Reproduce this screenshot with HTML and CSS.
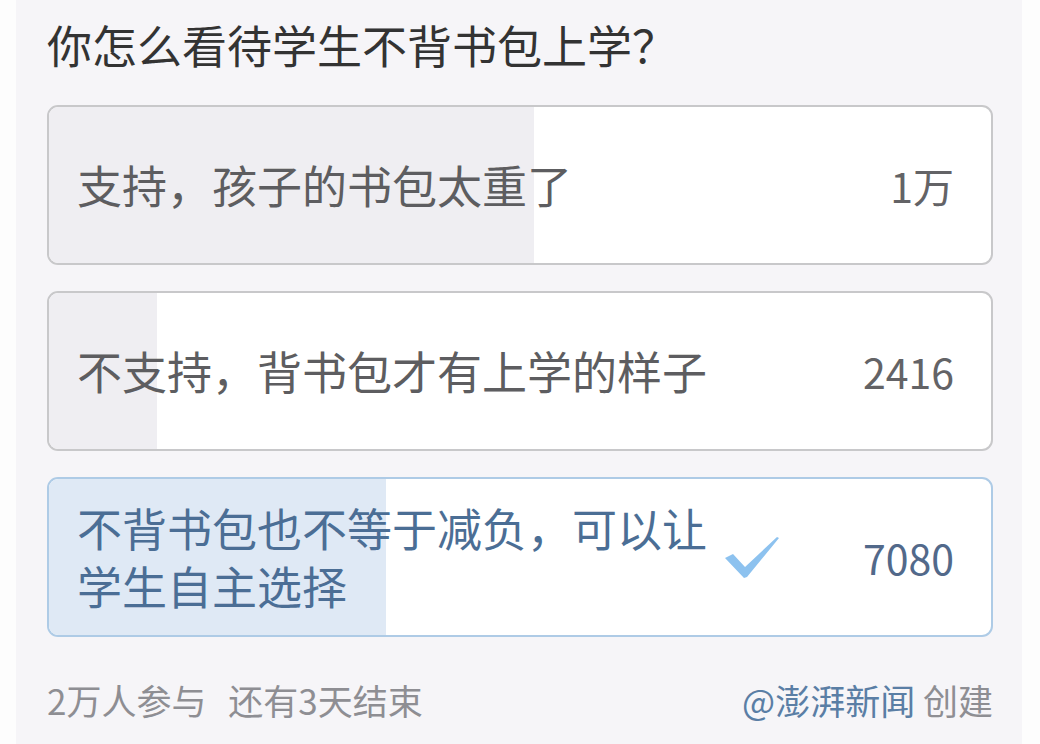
FILE: index.html
```html
<!DOCTYPE html>
<html lang="zh-CN">
<head>
    <meta charset="UTF-8">
    <meta name="viewport" content="width=device-width, initial-scale=1.0">
    <title>投票</title>
    <link rel="stylesheet" href="styles.css">
</head>
<body>

<div class="card">
    <h1 class="titulo">你怎么看待学生不背书包上学？</h1>

    <div class="opciones">
        <div class="opcion">
            <div class="barra" style="width: 51.5%;"></div>
            <span class="texto">支持，孩子的书包太重了</span>
            <span class="marca"></span>
            <span class="votos">1万</span>
        </div>
        <div class="opcion">
            <div class="barra" style="width: 11.5%;"></div>
            <span class="texto">不支持，背书包才有上学的样子</span>
            <span class="marca"></span>
            <span class="votos">2416</span>
        </div>
        <div class="opcion elegida">
            <div class="barra" style="width: 35.8%;"></div>
            <span class="texto">不背书包也不等于减负，可以让学生自主选择</span>
            <span class="marca">
                <svg width="56" height="46" viewBox="0 0 56 46">
                    <path d="M1 24 L9 20 L21 33 L53 3 L55 4 L23 43 L20 44 Z" fill="#8dc2ef"/>
                </svg>
            </span>
            <span class="votos">7080</span>
        </div>
    </div>

    <footer class="pie">
        <div class="info">
            <span>2万人参与</span>
            <span class="restante">还有3天结束</span>
        </div>
        <div class="autor">
            <span class="cuenta">@澎湃新闻</span> 创建
        </div>
    </footer>
</div>

</body>
</html>
```

FILE: styles.css
```css
body {
    font-family: "Noto Sans CJK SC", "Noto Sans", sans-serif;
    background-color: #fdfdfd;
    margin: 0;
    padding: 0;
}

.card {
    background-color: #f6f5f8;
    margin: 0 18px 0 16px;
    min-height: 744px;
    padding: 17px 29px 0 31px;
    box-sizing: border-box;
}

.titulo {
    margin: 0;
    font-size: 45px;
    font-weight: normal;
    line-height: 56px;
    color: #333333;
}

.opciones {
    margin-top: 32px;
    display: flex;
    flex-direction: column;
    gap: 26px;
}

.opcion {
    position: relative;
    height: 160px;
    box-sizing: border-box;
    border: 2px solid #c8c8ca;
    border-radius: 11px;
    background-color: #ffffff;
    overflow: hidden;
    display: flex;
    align-items: center;
    padding: 0 37px 0 28px;
}

.barra {
    position: absolute;
    left: 0;
    top: 0;
    bottom: 0;
    background-color: #efeef2;
}

.texto,
.marca,
.votos {
    position: relative;
}

.texto {
    flex: 1;
    font-size: 45px;
    line-height: 58px;
    color: #5d5d60;
}

.marca {
    width: 56px;
    height: 46px;
    margin: 0 24px 0 0;
}

.votos {
    width: 150px;
    text-align: right;
    font-size: 41px;
    color: #636366;
}

.elegida {
    border-color: #aecbe6;
}

.elegida .barra {
    background-color: #dfe9f5;
}

.elegida .texto {
    color: #4b6e95;
}

.elegida .votos {
    color: #52698a;
}

.pie {
    margin-top: 41px;
    display: flex;
    justify-content: space-between;
    font-size: 35px;
    line-height: 44px;
    color: #8e8e93;
}

.restante {
    margin-left: 14px;
}

.cuenta {
    color: #5a7ea5;
}
```
